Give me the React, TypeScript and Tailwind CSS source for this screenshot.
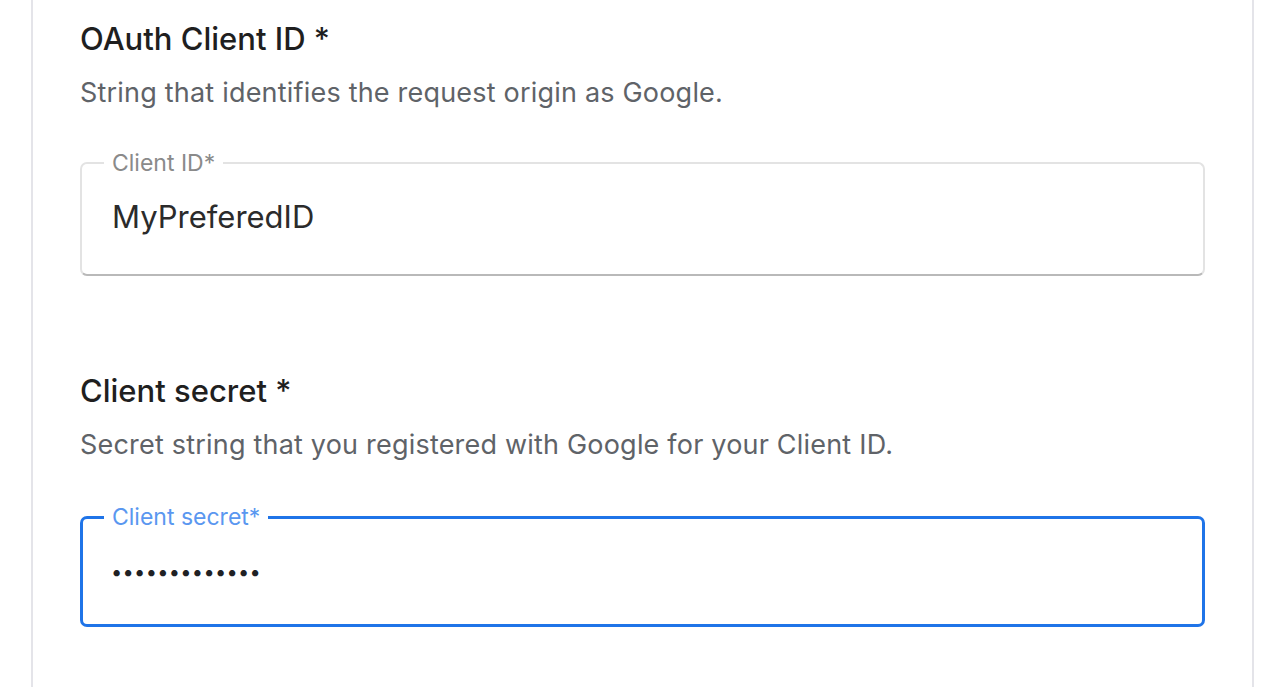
import React from 'react';

type FieldProps = {
  title: string;
  description: string;
  label: string;
  value: string;
  secret?: boolean;
};

const Field: React.FC<FieldProps> = ({ title, description, label, value, secret = false }) => {
  return (
    <div>
      <h2 className="text-[31px] font-medium leading-[36px] text-[#1f1f1f]">{title}</h2>
      <p className="mt-[20px] text-[27px] leading-[32px] tracking-[0.2px] text-[#5f6368]">{description}</p>
      <fieldset
        className={
          secret
            ? 'mt-[44px] h-[122px] rounded-[7px] border-[3px] border-[#1f74e8] pl-[21px] pr-[24px]'
            : 'mt-[42px] h-[125px] rounded-[7px] border-2 border-[#e3e3e3] border-b-[#b9b9b9] pl-[22px] pr-[24px]'
        }
      >
        <legend
          className={
            secret
              ? 'px-[8px] text-[23px] leading-[24px] text-[#5a97f0]'
              : 'px-[8px] text-[23px] leading-[24px] text-[#8a8a8a]'
          }
        >
          {label}
        </legend>
        {secret ? (
          <input
            type="password"
            value={value}
            readOnly
            className="mt-[23px] w-full bg-transparent pl-[7px] text-[20px] leading-[40px] tracking-[0.3px] text-[#202124] outline-none"
          />
        ) : (
          <input
            type="text"
            value={value}
            readOnly
            className="mt-[22px] w-full bg-transparent pl-[8px] text-[31px] leading-[40px] text-[#2b2b2b] outline-none"
          />
        )}
      </fieldset>
    </div>
  );
};

const App: React.FC = () => {
  return (
    <div className="h-[687px] w-full overflow-hidden bg-white" style={{ fontFamily: 'Inter, Roboto, sans-serif' }}>
      <div className="ml-[31px] h-full w-[1223px] border-x-2 border-[#e4e4e9] px-[47px] pt-[21px]">
        <Field
          title="OAuth Client ID *"
          description="String that identifies the request origin as Google."
          label="Client ID*"
          value="MyPreferedID"
        />
        <div className="mt-[97px]">
          <Field
            title="Client secret *"
            description="Secret string that you registered with Google for your Client ID."
            label="Client secret*"
            value="1234567890123"
            secret
          />
        </div>
      </div>
    </div>
  );
};

export default App;
